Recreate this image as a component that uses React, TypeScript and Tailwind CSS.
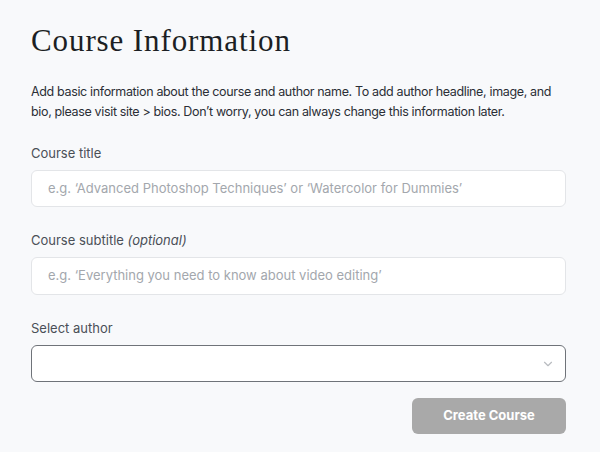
import React from 'react'
import { ChevronDown } from 'lucide-react'

export default function App() {
  return (
    <div className="min-h-screen w-[600px] bg-[#f8f9fb] pl-[31px] pr-[34px] pt-[21px] text-[#1f2328]" style={{ fontFamily: 'Inter, "Liberation Sans", sans-serif' }}>
      <h1 className="text-[31px] leading-[40px] tracking-[0.9px] text-[#1c1f24]" style={{ fontFamily: '"Liberation Serif", serif' }}>
        Course Information
      </h1>
      <p className="mt-[21px] text-[12.5px] leading-[20px] tracking-[-0.35px] text-[#2b2f36]">
        Add basic information about the course and author name. To add author headline, image, and bio, please visit site &gt; bios. Don’t worry, you can always change this information later.
      </p>

      <label className="mt-[21px] block text-[13px] leading-[20px] text-[#4a4f57]">Course title</label>
      <div className="mt-[7px] flex h-[37px] items-center rounded-md border border-[#e3e5e8] bg-white px-4 text-[13px] text-[#a3a7ad]">
        e.g. ‘Advanced Photoshop Techniques’ or ‘Watercolor for Dummies’
      </div>

      <label className="mt-[23px] block text-[13px] leading-[20px] text-[#4a4f57]">
        Course subtitle <em>(optional)</em>
      </label>
      <div className="mt-[7px] flex h-[38px] items-center rounded-md border border-[#e3e5e8] bg-white px-4 text-[13px] text-[#a3a7ad]">
        e.g. ‘Everything you need to know about video editing’
      </div>

      <label className="mt-[23px] block text-[13px] leading-[20px] text-[#4a4f57]">Select author</label>
      <div className="mt-[7px] flex h-[37px] items-center justify-end rounded-md border border-[#6f7379] bg-white pr-[10px]">
        <ChevronDown className="h-[14px] w-[14px] text-[#b9bcc0]" strokeWidth={2} />
      </div>

      <div className="mt-4 flex justify-end">
        <button className="h-[36px] w-[154px] rounded-md bg-[#a9a9a9] text-[13px] font-bold text-white">
          Create Course
        </button>
      </div>
    </div>
  )
}
